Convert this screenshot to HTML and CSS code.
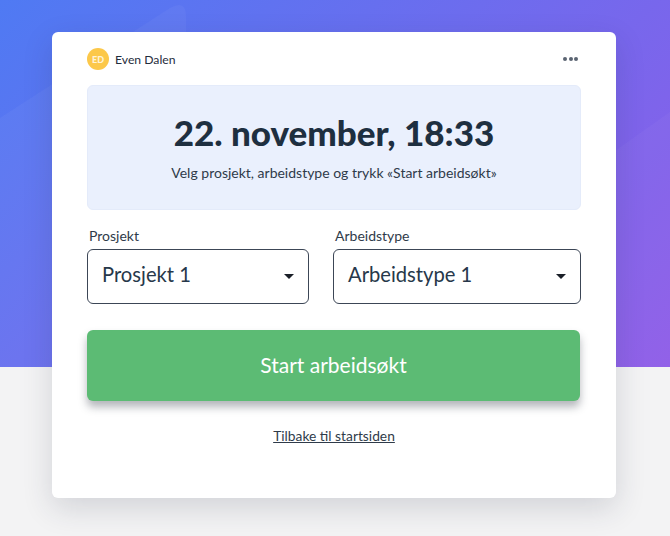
FILE: index.html
```html
<!DOCTYPE html>
<html lang="no">

<head>
    <meta charset="UTF-8">
    <meta name="viewport" content="width=device-width, initial-scale=1.0">
    <title>Start arbeidsøkt</title>

    <link rel="stylesheet" href="styles.css">
</head>

<body>
    <div class="hero">
        <svg class="hero_shapes" viewBox="0 0 670 367" width="670" height="367">
            <path d="M0 118 L170 8 Q186 -1 186 16 L186 367 L0 367 Z" fill="#fff" fill-opacity="0.04"></path>
            <path d="M670 112 L560 190 L560 367 L670 367 Z" fill="#fff" fill-opacity="0.03"></path>
        </svg>
    </div>

    <main class="card">
        <header class="user">
            <div class="user_info">
                <span class="avatar">ED</span>
                <span class="user_name">Even Dalen</span>
            </div>
            <div class="dots">
                <span></span>
                <span></span>
                <span></span>
            </div>
        </header>

        <section class="status">
            <h1>22. november, 18:33</h1>
            <p>Velg prosjekt, arbeidstype og trykk «Start arbeidsøkt»</p>
        </section>

        <div class="fields">
            <div class="field">
                <label>Prosjekt</label>
                <div class="select">
                    <span>Prosjekt 1</span>
                    <i class="caret"></i>
                </div>
            </div>
            <div class="field">
                <label>Arbeidstype</label>
                <div class="select">
                    <span>Arbeidstype 1</span>
                    <i class="caret"></i>
                </div>
            </div>
        </div>

        <button class="start">Start arbeidsøkt</button>

        <div class="back">
            <a href="#">Tilbake til startsiden</a>
        </div>
    </main>
</body>

</html>
```

FILE: styles.css
```css
* {
    box-sizing: border-box;
}

body {
    margin: 0;
    height: 536px;
    overflow: hidden;
    position: relative;
    background: #f3f3f4;
    font-family: 'Lato', 'Liberation Sans', sans-serif;
    color: #1f2d3d;
}

.hero {
    position: absolute;
    top: 0;
    left: 0;
    width: 100%;
    height: 367px;
    overflow: hidden;
    background: linear-gradient(135deg, #4f7af3, #8f5ce8);
}

.hero_shapes {
    display: block;
}

.card {
    position: relative;
    width: 564px;
    height: 466px;
    margin: 32px 0 0 52px;
    padding: 16px 35px 0;
    background: white;
    border-radius: 6px;
    box-shadow: 0 10px 30px rgba(40, 45, 70, .16);
}

.user {
    display: flex;
    justify-content: space-between;
    align-items: center;
    height: 22px;
    padding-right: 3px;
}

.user_info {
    display: flex;
    align-items: center;
    gap: 6px;
}

.avatar {
    display: flex;
    justify-content: center;
    align-items: center;
    width: 22px;
    height: 22px;
    border-radius: 50%;
    background: #fcc84a;
    color: #fff3d6;
    font-size: 9px;
    font-weight: 900;
}

.user_name {
    font-size: 12.2px;
}

.dots {
    display: flex;
    gap: 1.5px;
}

.dots span {
    width: 4px;
    height: 4px;
    border-radius: 50%;
    background: #5a6472;
}

.status {
    height: 125px;
    margin-top: 15px;
    padding-top: 25px;
    border: 1px solid #e4ebfa;
    border-radius: 6px;
    background: #eaf0fd;
    text-align: center;
}

.status h1 {
    margin: 0;
    font-size: 35px;
    line-height: 42px;
    font-weight: 900;
    color: #1e2f40;
}

.status p {
    margin: 11px 0 0;
    font-size: 14px;
    line-height: 18px;
    color: #2f3b4a;
}

.fields {
    display: grid;
    grid-template-columns: 222px 248px;
    gap: 24px;
    margin-top: 17px;
}

.field label {
    display: block;
    padding-left: 2px;
    margin-bottom: 5px;
    font-size: 14px;
    line-height: 17px;
    color: #2f3b4a;
}

.select {
    display: flex;
    justify-content: space-between;
    align-items: center;
    height: 55px;
    padding: 0 14px 5px;
    border: 1px solid #3c4656;
    border-radius: 6px;
    font-size: 20.2px;
    color: #27384a;
}

.caret {
    width: 0;
    height: 0;
    margin-top: 5px;
    border-left: 5px solid transparent;
    border-right: 5px solid transparent;
    border-top: 5px solid #1a1f28;
}

.start {
    display: block;
    width: 493px;
    height: 71px;
    margin-top: 26px;
    padding-bottom: 3px;
    border: none;
    border-radius: 6px;
    background: #5cbb74;
    box-shadow: 0 6px 8px rgba(40, 45, 60, .35);
    color: white;
    font-family: inherit;
    font-size: 21px;
}

.back {
    margin-top: 26px;
    text-align: center;
    font-size: 13.8px;
    line-height: 18px;
}

.back a {
    color: #2f3b4a;
}
```
